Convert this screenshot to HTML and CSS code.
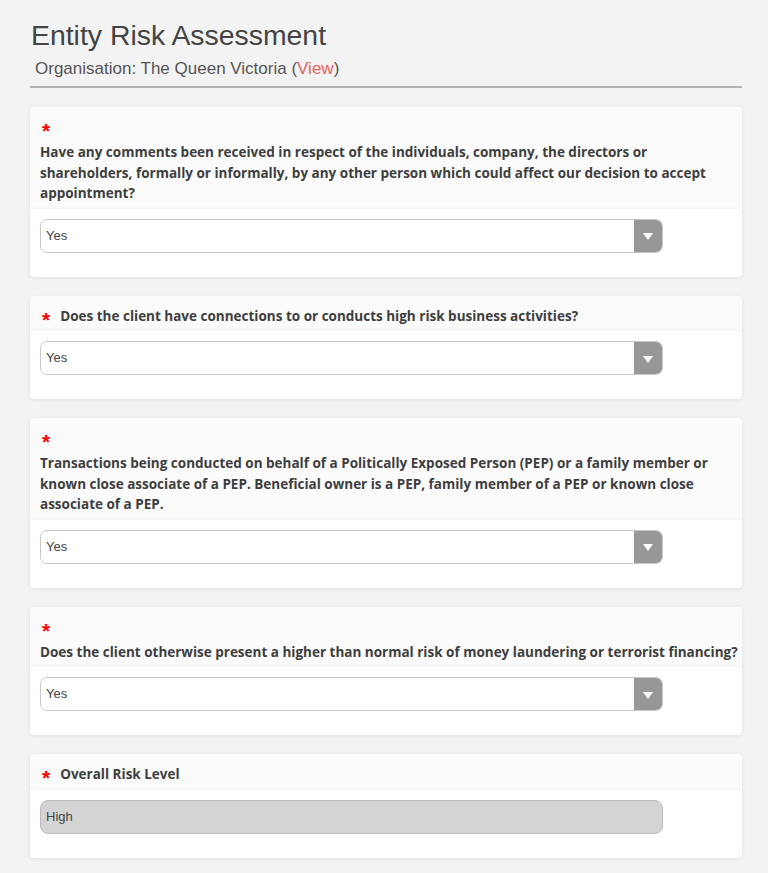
FILE: index.html
```html
<!DOCTYPE html>
<html lang="en">
<head>
  <meta charset="UTF-8" />
  <meta name="viewport" content="width=device-width,initial-scale=1.0" />
  <title>Entity Risk Assessment</title>
  <link rel="stylesheet" href="styles.css">
</head>
<body>
  <main>
    <header class="page-head">
      <h1>Entity Risk Assessment</h1>
      <p class="org">Organisation: The Queen Victoria (<a href="#">View</a>)</p>
    </header>

    <section class="card">
      <div class="card-label">
        <span class="req">*</span>
        <span class="question block">Have any comments been received in respect of the individuals, company, the directors or<br>shareholders, formally or informally, by any other person which could affect our decision to accept appointment?</span>
      </div>
      <div class="card-body">
        <div class="select">
          <span class="select-value">Yes</span>
          <span class="select-btn"><i class="caret"></i></span>
        </div>
      </div>
    </section>

    <section class="card">
      <div class="card-label">
        <span class="req">*</span>
        <span class="question">Does the client have connections to or conducts high risk business activities?</span>
      </div>
      <div class="card-body">
        <div class="select">
          <span class="select-value">Yes</span>
          <span class="select-btn"><i class="caret"></i></span>
        </div>
      </div>
    </section>

    <section class="card">
      <div class="card-label">
        <span class="req">*</span>
        <span class="question block">Transactions being conducted on behalf of a Politically Exposed Person (PEP) or a family member or known close associate of a PEP. Beneficial owner is a PEP, family member of a PEP or known close associate of a PEP.</span>
      </div>
      <div class="card-body">
        <div class="select">
          <span class="select-value">Yes</span>
          <span class="select-btn"><i class="caret"></i></span>
        </div>
      </div>
    </section>

    <section class="card">
      <div class="card-label">
        <span class="req">*</span>
        <span class="question block">Does the client otherwise present a higher than normal risk of money laundering or terrorist financing?</span>
      </div>
      <div class="card-body">
        <div class="select">
          <span class="select-value">Yes</span>
          <span class="select-btn"><i class="caret"></i></span>
        </div>
      </div>
    </section>

    <section class="card">
      <div class="card-label">
        <span class="req">*</span>
        <span class="question">Overall Risk Level</span>
      </div>
      <div class="card-body">
        <div class="readonly">High</div>
      </div>
    </section>
  </main>
</body>
</html>
```

FILE: styles.css
```css
body {
  background: #f3f3f3;
  color: #444;
  font-family: 'Liberation Sans', Arial, sans-serif;
  margin: 0;
  padding: 0;
}
main {
  width: 712px;
  margin-left: 30px;
  padding-top: 18px;
}
.page-head {
  border-bottom: 2px solid #b4b4b4;
  padding-bottom: 7px;
  margin-bottom: 19px;
}
h1 {
  font-size: 28.4px;
  font-weight: normal;
  line-height: 34px;
  margin: 0 0 0 1px;
  color: #444;
}
.org {
  font-size: 17px;
  line-height: 20px;
  margin: 7px 0 0 5px;
  color: #555;
}
.org a {
  color: #e8645a;
  text-decoration: none;
}
.card {
  background: #fff;
  border-radius: 4px;
  box-shadow: 0 1px 4px rgba(0,0,0,0.08);
  margin-bottom: 19px;
  overflow: hidden;
}
.card-label {
  display: flex;
  flex-wrap: wrap;
  align-items: center;
  background: #fbfbfb;
  padding: 10px 1px 5px 12px;
  font-family: 'Open Sans', Arial, sans-serif;
  font-size: 13.5px;
  font-weight: bold;
  line-height: 20.5px;
  color: #3e3e3e;
}
.req {
  color: #f00;
  font-family: 'Liberation Sans', Arial, sans-serif;
  font-size: 21px;
  height: 20px;
  line-height: 27px;
  margin-right: 10px;
}
.question.block {
  flex-basis: 100%;
  margin-top: 5px;
  margin-left: -2px;
}
.card-body {
  padding: 10px 10px 24px;
  box-shadow: 0 -1px 3px rgba(0,0,0,0.03);
}
.select {
  display: flex;
  width: 623px;
  height: 34px;
  box-sizing: border-box;
  border: 1px solid #c8c8c8;
  border-radius: 7px;
  overflow: hidden;
  font-size: 13px;
}
.select-value {
  flex: 1;
  padding-left: 5px;
  line-height: 32px;
  color: #444;
}
.select-btn {
  width: 28px;
  background: #979797;
  display: flex;
  align-items: center;
  justify-content: center;
}
.caret {
  width: 0;
  height: 0;
  border-left: 5px solid transparent;
  border-right: 5px solid transparent;
  border-top: 7px solid #fff;
  margin-top: 2px;
}
.readonly {
  width: 623px;
  height: 34px;
  box-sizing: border-box;
  border: 1px solid #bdbdbd;
  border-radius: 8px;
  background: #d4d4d4;
  font-size: 13px;
  line-height: 32px;
  padding-left: 5px;
  color: #444;
}
```
